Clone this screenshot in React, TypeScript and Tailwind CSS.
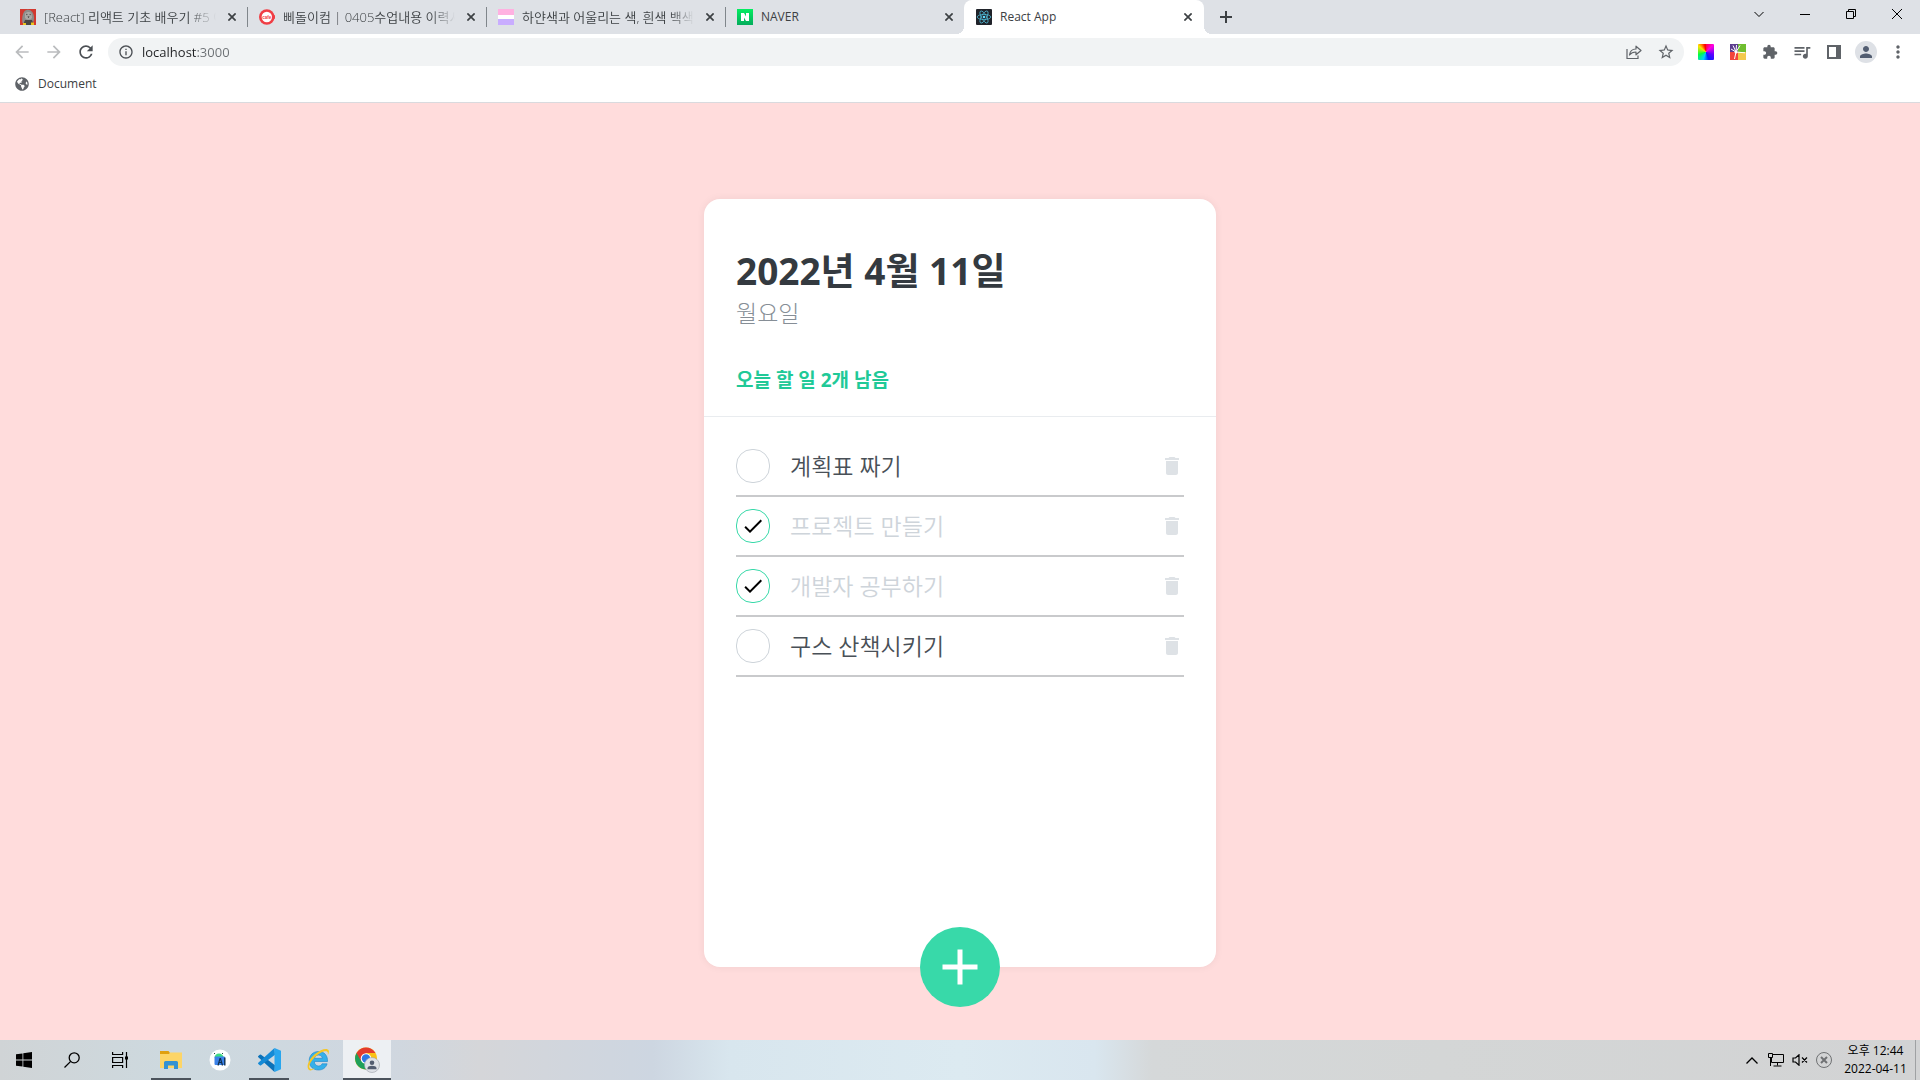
import { useState, type ReactNode } from "react";
import { FaGlobeAmericas } from "react-icons/fa";
import {
  MdAdd,
  MdArrowBack,
  MdArrowForward,
  MdDelete,
  MdDone,
  MdExtension,
  MdInfoOutline,
  MdMoreVert,
  MdPerson,
  MdQueueMusic,
  MdRefresh,
  MdStarBorder,
} from "react-icons/md";

type Todo = { id: number; text: string; done: boolean };

const initialTodos: Todo[] = [
  { id: 1, text: "계획표 짜기", done: false },
  { id: 2, text: "프로젝트 만들기", done: true },
  { id: 3, text: "개발자 공부하기", done: true },
  { id: 4, text: "구스 산책시키기", done: false },
];

/* ---------- Favicons ---------- */

function DogFavicon() {
  return (
    <svg viewBox="0 0 16 16" className="size-4">
      <rect width="16" height="16" fill="#d2382f" />
      <path d="M2.500 14C1.500 8 3 2 6.500 1c4-1 7 2 7.500 7 .2 3-.5 5-1.500 6z" fill="#8d8b88" />
      <path d="M5 4.500c2-2 5-2 6.500 0l.5 4c-1 3-6 3-7 0z" fill="#aaa8a4" />
      <circle cx="6.800" cy="5.500" r=".7" fill="#55524f" />
      <circle cx="10.200" cy="5.500" r=".7" fill="#55524f" />
      <path d="M7.500 7.500h2l-1 1.500z" fill="#2d2b2a" />
      <path d="M5 11h7l2 5H3z" fill="#4a4644" />
      <path d="M3 14h3v2H3zM11 13.500h3V16h-3z" fill="#e9c51e" />
    </svg>
  );
}

function CafeFavicon() {
  return (
    <svg viewBox="0 0 16 16" className="size-4">
      <circle cx="7.800" cy="8" r="7.800" fill="#f03e45" />
      <rect x="14" y="6" width="2" height="4" rx="1" fill="#f03e45" />
      <circle cx="7.800" cy="8" r="5.200" fill="#fff" />
      <text x="7.800" y="9.500" textAnchor="middle" fontSize="4.500" fontWeight="700" fontFamily="Liberation Sans" fill="#f03e45">
        cafe
      </text>
    </svg>
  );
}

function StripeFavicon() {
  return (
    <svg viewBox="0 0 16 16" className="size-4">
      <rect width="16" height="16" fill="#fff" />
      <rect width="16" height="6" fill="#ffb1e1" />
      <rect y="10" width="16" height="6" fill="#c9adff" />
    </svg>
  );
}

function NaverFavicon() {
  return (
    <svg viewBox="0 0 16 16" className="size-4">
      <defs>
        <linearGradient id="naver" x1="0" y1="0" x2="0" y2="1">
          <stop offset="0" stopColor="#03ee61" />
          <stop offset="1" stopColor="#05ac5c" />
        </linearGradient>
      </defs>
      <rect width="16" height="16" fill="url(#naver)" />
      <path d="M4 4h3l2 3.500V4h3v8H9L7 8.500V12H4z" fill="#fff" />
    </svg>
  );
}

function ReactFavicon() {
  return (
    <svg viewBox="0 0 16 16" className="size-4">
      <rect width="16" height="16" rx="1" fill="#20232a" />
      <g fill="none" stroke="#4db5cf" strokeWidth=".8">
        <ellipse cx="8" cy="8" rx="6.800" ry="2.600" />
        <ellipse cx="8" cy="8" rx="6.800" ry="2.600" transform="rotate(60 8 8)" />
        <ellipse cx="8" cy="8" rx="6.800" ry="2.600" transform="rotate(120 8 8)" />
      </g>
      <circle cx="8" cy="8" r="1.300" fill="#61dafb" />
    </svg>
  );
}

/* ---------- Browser window ---------- */

function TabTitle({ children, large }: { children: ReactNode; large?: boolean }) {
  return (
    <span
      className={`min-w-0 flex-1 whitespace-nowrap text-left leading-4 text-[#3c4043] ${
        large ? "text-[13px] font-[350] [mask-image:linear-gradient(to_right,#000_calc(100%-24px),transparent)]" : "text-xs"
      }`}
    >
      {children}
    </span>
  );
}

function CloseTab({ title }: { title: string }) {
  return (
    <button type="button" aria-label={`${title} 닫기`} className="flex size-4 shrink-0 items-center justify-center text-[#3c4043]">
      <svg viewBox="0 0 8 8" className="size-2" stroke="currentColor" strokeWidth="1.700">
        <path d="M.4.4l7.200 7.200M7.600.4L.4 7.600" />
      </svg>
    </button>
  );
}

function TabStrip() {
  const tabs = [
    { title: "[React] 리액트 기초 배우기 #5 이", icon: <DogFavicon />, large: true },
    { title: "삐돌이컴 | 0405수업내용 이력서", icon: <CafeFavicon />, large: true },
    { title: "하얀색과 어울리는 색, 흰색 백색", icon: <StripeFavicon />, large: true },
    { title: "NAVER", icon: <NaverFavicon />, large: false },
  ];
  return (
    <div className="flex h-[34px] bg-[#dee1e6] pl-2">
      {tabs.map((tab, i) => (
        <div key={tab.title} className={`flex w-[239px] items-center gap-2 pr-[7px] ${i === 0 ? "pl-3" : ""}`}>
          {i > 0 && <span className="mr-[3px] h-5 w-px bg-[#80868b]" />}
          {tab.icon}
          <TabTitle large={tab.large}>{tab.title}</TabTitle>
          <CloseTab title={tab.title} />
        </div>
      ))}
      <div className="relative flex w-60 items-center gap-2 rounded-t-lg bg-white pl-3 pr-2">
        <span className="absolute bottom-0 -left-2 size-2 bg-[radial-gradient(circle_at_0_0,transparent_8px,#fff_8px)]" />
        <span className="absolute -right-2 bottom-0 size-2 bg-[radial-gradient(circle_at_100%_0,transparent_8px,#fff_8px)]" />
        <ReactFavicon />
        <TabTitle>React App</TabTitle>
        <CloseTab title="React App" />
      </div>
      <button type="button" aria-label="새 탭" className="ml-2 flex w-7 items-center justify-center text-[#3c4043]">
        <svg viewBox="0 0 12 12" className="size-3" stroke="currentColor" strokeWidth="2">
          <path d="M6 0v12M0 6h12" />
        </svg>
      </button>
      <div className="ml-auto flex h-7 text-black">
        <WindowButton label="탭 검색">
          <path d="M.5 3l4.500 4.500L9.500 3" />
        </WindowButton>
        <WindowButton label="최소화">
          <path d="M0 5.500h10" />
        </WindowButton>
        <WindowButton label="이전 크기로 복원">
          <path d="M.5 2.500h7v7h-7zM2.500 2.500v-2h7v7h-2" />
        </WindowButton>
        <WindowButton label="닫기">
          <path d="M0 0l10 10M10 0L0 10" />
        </WindowButton>
      </div>
    </div>
  );
}

function WindowButton({ label, children }: { label: string; children: ReactNode }) {
  return (
    <button type="button" aria-label={label} className="flex w-[46px] items-center justify-center">
      <svg viewBox="0 0 10 10" className="size-[10px] overflow-visible" fill="none" stroke="currentColor">
        {children}
      </svg>
    </button>
  );
}

function ToolButton({ label, children, className = "text-[#5f6368]" }: { label: string; children: ReactNode; className?: string }) {
  return (
    <button type="button" aria-label={label} className={`flex size-8 shrink-0 items-center justify-center ${className}`}>
      {children}
    </button>
  );
}

function Toolbar() {
  return (
    <div className="flex h-9 items-center bg-white px-[6px]">
      <ToolButton label="뒤로" className="text-[#babcbe]">
        <MdArrowBack className="size-5" />
      </ToolButton>
      <ToolButton label="앞으로" className="text-[#babcbe]">
        <MdArrowForward className="size-5" />
      </ToolButton>
      <ToolButton label="새로고침" className="text-[#4b4f54]">
        <MdRefresh className="size-5" />
      </ToolButton>
      <div className="mx-[6px] flex h-7 flex-1 items-center rounded-full bg-[#f1f3f4] pl-[10px] pr-[2px]">
        <MdInfoOutline className="size-4 shrink-0 text-[#4b4f54]" />
        <div className="ml-2 flex-1 text-[13px] leading-5">
          <input
            aria-label="주소창"
            defaultValue="localhost:3000"
            className="block w-full bg-[linear-gradient(to_right,#202124_55px,#6b6f73_55px)] bg-clip-text text-transparent outline-none"
          />
        </div>
        <ToolButton label="공유">
          <svg viewBox="0 0 16 16" className="size-4" fill="none" stroke="currentColor" strokeWidth="1.200">
            <path d="M1 5v9.500h11v-3" />
            <path d="M3.500 11c.5-4 3-6 6.500-6V2.200l5 4.300-5 4.300V8C7 8 5 9 3.500 11z" strokeLinejoin="round" />
          </svg>
        </ToolButton>
        <ToolButton label="북마크에 추가">
          <MdStarBorder className="size-[18px]" />
        </ToolButton>
      </div>
      <ToolButton label="색상 선택 확장 프로그램">
        <span className="size-4 rounded-[1px] bg-[conic-gradient(from_0deg,#ff0040,#ff00e0_45deg,#6000ff_110deg,#0020ff_160deg,#00d0ff_200deg,#00ff40_250deg,#ffe000_310deg,#ff0000_350deg)]" />
      </ToolButton>
      <ToolButton label="스타일 확장 프로그램">
        <svg viewBox="0 0 16 16" className="size-4">
          <rect width="8" height="8" fill="#5c3d8f" />
          <rect x="8" width="8" height="8" fill="#6fbe2f" />
          <rect y="8" width="8" height="8" fill="#f2453d" />
          <rect x="8" y="8" width="8" height="8" fill="#f3c94e" />
          <path d="M4.500 15L6 8M6 8L1 5M6 8L3 1.500M6 8l.5-7M6 8l4-6.500M6 8l9 .8" stroke="#fff" fill="none" />
          <circle cx="6" cy="8" r="1.500" fill="#fff" />
        </svg>
      </ToolButton>
      <ToolButton label="확장 프로그램">
        <MdExtension className="size-4" />
      </ToolButton>
      <ToolButton label="미디어 제어">
        <MdQueueMusic className="size-5" />
      </ToolButton>
      <ToolButton label="측면 패널">
        <svg viewBox="0 0 14 14" className="size-[14px]" fill="currentColor">
          <path fillRule="evenodd" d="M0 0h14v14H0zM2 2v10h7V2z" />
        </svg>
      </ToolButton>
      <ToolButton label="프로필">
        <span className="flex size-[22px] items-center justify-center rounded-full bg-[#dee1e6] text-[#525d71]">
          <MdPerson className="size-[18px]" />
        </span>
      </ToolButton>
      <ToolButton label="Chrome 맞춤설정">
        <MdMoreVert className="size-5" />
      </ToolButton>
    </div>
  );
}

function BookmarksBar() {
  return (
    <nav className="flex h-[33px] items-start border-b border-[#d9dade] bg-white pt-[6px] pl-[15px]">
      <a href="#document" className="flex items-center gap-[9px] text-xs leading-4 text-[#3c4043]">
        <FaGlobeAmericas className="size-[14px] text-[#5f6368]" />
        Document
      </a>
    </nav>
  );
}

/* ---------- Todo app ---------- */

function TodoRow({ todo, onToggle, onRemove }: { todo: Todo; onToggle: () => void; onRemove: () => void }) {
  const id = `todo-${todo.id}`;
  return (
    <li className="flex items-center border-b-2 border-[#c9cacc] py-3">
      <span className="mr-5 grid size-[34px] place-items-center">
        <input
          id={id}
          type="checkbox"
          checked={todo.done}
          onChange={onToggle}
          className="col-start-1 row-start-1 size-[34px] appearance-none rounded-[16px] border border-[#ced4da] checked:border-[#38d9a9]"
        />
        {todo.done && <MdDone className="pointer-events-none col-start-1 row-start-1 size-6 text-black" />}
      </span>
      <label htmlFor={id} className={`flex-1 text-[23px] leading-8 font-[350] ${todo.done ? "text-[#ced4da]" : "text-[#495057]"}`}>
        {todo.text}
      </label>
      <button type="button" aria-label={`${todo.text} 삭제`} onClick={onRemove} className="text-[#dee2e6]">
        <MdDelete className="size-6" />
      </button>
    </li>
  );
}

function TodoCard() {
  const [todos, setTodos] = useState(initialTodos);
  const left = todos.filter((t) => !t.done).length;
  const toggle = (id: number) => setTodos((list) => list.map((t) => (t.id === id ? { ...t, done: !t.done } : t)));
  const remove = (id: number) => setTodos((list) => list.filter((t) => t.id !== id));

  return (
    <section className="relative flex w-full max-w-lg flex-1 flex-col rounded-2xl bg-white shadow-[0_0_8px_rgba(0,0,0,0.06)]">
      <header className="border-b border-[#e9ecef] px-8 pt-12 pb-6">
        <h1 className="text-[37px] leading-[48px] font-bold text-[#343a40]">2022년 4월 11일</h1>
        <p className="mt-1 text-[23px] leading-7 font-light text-[#868e96]">월요일</p>
        <p className="mt-[41px] text-[19px] leading-6 font-bold text-[#20c997]">오늘 할 일 {left}개 남음</p>
      </header>
      <ul className="flex-1 px-8 pt-5 pb-12">
        {todos.map((todo) => (
          <TodoRow key={todo.id} todo={todo} onToggle={() => toggle(todo.id)} onRemove={() => remove(todo.id)} />
        ))}
      </ul>
      <button
        type="button"
        aria-label="할 일 추가"
        className="absolute bottom-0 left-1/2 flex size-20 -translate-x-1/2 translate-y-1/2 items-center justify-center rounded-full bg-[#38d9a9] text-white"
      >
        <MdAdd className="size-[60px]" />
      </button>
    </section>
  );
}

/* ---------- Taskbar ---------- */

function TaskButton({ label, children, open, active }: { label: string; children: ReactNode; open?: boolean; active?: boolean }) {
  return (
    <button
      type="button"
      aria-label={label}
      className={`relative flex w-12 items-center justify-center ${active ? "bg-[#edf0f3]" : ""}`}
    >
      {children}
      {open && <span className={`absolute bottom-0 h-[2px] bg-[#4b535c] ${active ? "inset-x-0" : "inset-x-1"}`} />}
    </button>
  );
}

function Taskbar() {
  return (
    <footer className="flex h-10 bg-[linear-gradient(to_right,#d0d4d6_0%,#cdd9df_9%,#cfd7e0_20%,#d5d6d9_25%,#cdd6e1_34%,#d8e6ee_38%,#dceaf1_50%,#d9e6ef_57%,#d5d8d9_60%,#d4d6d6_75%,#d2d3d4_100%)] text-black">
      <TaskButton label="시작">
        <svg viewBox="0 0 16 16" className="size-4">
          <path d="M0 2.300l6.500-.9v6.100H0zM7.300 1.300L16 0v7.500H7.300zM0 8.400h6.500v6.200L0 13.700zM7.300 8.400H16V16l-8.700-1.300z" />
        </svg>
      </TaskButton>
      <TaskButton label="검색">
        <svg viewBox="0 0 16 16" className="size-4" fill="none" stroke="currentColor" strokeWidth="1.300">
          <circle cx="10.200" cy="5.800" r="5" />
          <path d="M6.700 9.400L.5 15.500" />
        </svg>
      </TaskButton>
      <TaskButton label="작업 보기">
        <svg viewBox="0 0 16 16" className="size-4" fill="none" stroke="currentColor" strokeWidth="1.200">
          <path d="M.6 0v2.500h10V0M.6 16v-2.500h10V16M.6 5.500h10v5H.6zM14.500 0v16" />
          <rect x="13" y="4.500" width="3" height="3" fill="currentColor" stroke="none" />
        </svg>
      </TaskButton>
      <div className="ml-[3px] flex gap-px">
        <TaskButton label="파일 탐색기" open>
          <svg viewBox="0 0 22 18" className="h-[18px] w-[22px]">
            <path d="M0 0h8.500l1.500 2v3H0z" fill="#e0a010" />
            <path d="M0 3h9l1-1.500h12V17H0z" fill="#fdd567" />
            <path d="M4 11.500a1.500 1.500 0 011.500-1.500h11a1.500 1.500 0 011.500 1.500V18h-4v-3.500H8V18H4z" fill="#3592d3" />
          </svg>
        </TaskButton>
        <TaskButton label="Android Studio">
          <svg viewBox="0 0 22 22" className="size-[22px]">
            <circle cx="11" cy="11" r="10.500" fill="#fff" />
            <path d="M5.500 8.500a4.500 4 0 019 0z" fill="#3ddc84" />
            <path d="M6 5L5 4M13 5l1-1" stroke="#1b4c40" />
            <rect x="5.500" y="7.500" width="10.500" height="8.500" rx="1" fill="#3b82e8" />
            <path d="M9 16.500l2-7h.5l2 7M10 13.500h3" fill="none" stroke="#10304f" strokeWidth="1.200" />
            <path d="M15.800 8.500v8" stroke="#10304f" strokeWidth="1.400" />
          </svg>
        </TaskButton>
        <TaskButton label="Visual Studio Code" open>
          <svg viewBox="0 0 24 24" className="size-6">
            <path d="M17.500 24L1.300 9.200a.8.8 0 010-1.200l1.500-1.300a1 1 0 011.300 0L18 17.200z" fill="#0b72b9" />
            <path d="M17.500 0L1.300 14.800a.8.8 0 000 1.200l1.500 1.300a1 1 0 001.300 0L18 6.800z" fill="#148ad6" />
            <path d="M17.500 0L24 2.800v18.400L17.500 24z" fill="#29a6ee" />
          </svg>
        </TaskButton>
        <TaskButton label="Internet Explorer">
          <svg viewBox="0 0 24 24" className="size-6">
            <path
              d="M21.500 13.500H8.300c.2 3 2 4.500 4.200 4.500 1.800 0 2.900-.8 3.500-2.200h5.100C20 19.700 16.800 22 12.500 22 6.800 22 3.200 18.200 3.200 12.800 3.200 7.300 7 3.500 12.500 3.500c5.800 0 9.400 4 9 10zM8.500 10.300h7.800c-.2-2-1.600-3.200-3.800-3.200s-3.600 1.200-4 3.200z"
              fill="#35b0ea"
              stroke="#1b83c9"
              strokeWidth=".6"
            />
            <path d="M3 22C-.5 19 3 11 9 6 15 1 21.500-.5 22.700 2.500c.5 1.300 0 3-.9 4.500.3-1.800.1-2.800-.8-3.400C18.500 2.200 13 5 8.500 9.500 4 14 1.800 19 4.200 20.800c1.200.8 3 .3 5-.7C6.500 22.300 4.300 23 3 22z" fill="#f5c626" />
          </svg>
        </TaskButton>
        <TaskButton label="Chrome" open active>
          <svg viewBox="0 0 26 26" className="size-[26px]">
            <circle cx="12" cy="11.500" r="11" fill="#fbc116" />
            <path d="M2.500 6a11 11 0 009.500 16.500l5-8.500-5-2.500z" fill="#1fa05a" />
            <path d="M2.500 6A11 11 0 0121.500 6H12L7 14z" fill="#e33b2e" />
            <circle cx="12" cy="11.500" r="5.300" fill="#fff" />
            <circle cx="12" cy="11.500" r="4.200" fill="#2f78e4" />
            <circle cx="18" cy="18" r="7.500" fill="#dfe2e7" stroke="#9aa0a8" strokeWidth=".6" />
            <circle cx="18" cy="15.700" r="2.300" fill="#535d70" />
            <path d="M13.500 22.200v-1.200c0-1.500 2.500-2.300 4.500-2.300s4.500.8 4.500 2.300v1.200z" fill="#535d70" />
          </svg>
        </TaskButton>
      </div>
      <div className="ml-auto flex items-center">
        <button type="button" aria-label="숨겨진 아이콘 표시" className="flex w-6 justify-center">
          <svg viewBox="0 0 12 7" className="h-[7px] w-3" fill="none" stroke="currentColor" strokeWidth="1.300">
            <path d="M.5 6.500L6 1l5.500 5.500" />
          </svg>
        </button>
        <button type="button" aria-label="네트워크" className="flex w-6 justify-center">
          <svg viewBox="0 0 16 14" className="h-[14px] w-4" fill="none" stroke="currentColor">
            <path d="M5 1.500h10.500v8H3.500V5M9.500 9.500v3M5.500 13h8" />
            <path d="M.5.500h4v4h-4zM2.500 4.500V13" />
          </svg>
        </button>
        <button type="button" aria-label="음소거" className="flex w-6 justify-center">
          <svg viewBox="0 0 16 12" className="h-3 w-4" fill="none" stroke="currentColor" strokeWidth="1.200">
            <path d="M1 4h2.500L7 .8v10.400L3.500 8H1zM10 3.500l5 5M15 3.500l-5 5" />
          </svg>
        </button>
        <button type="button" aria-label="알림" className="flex w-6 justify-center text-[#6f7173]">
          <svg viewBox="0 0 16 16" className="size-4" fill="none" stroke="currentColor">
            <circle cx="8" cy="8" r="7.500" />
            <path d="M5 5l6 6M11 5l-6 6" strokeWidth="2" />
          </svg>
        </button>
        <div className="w-[79px] text-center text-xs leading-[18px]">
          <div>오후 12:44</div>
          <div>2022-04-11</div>
        </div>
        <button type="button" aria-label="바탕 화면 보기" className="h-10 w-[5px] border-l border-[#9fa1a3]" />
      </div>
    </footer>
  );
}

export default function App() {
  return (
    <div className="flex min-h-screen flex-col bg-white font-['Open_Sans','Noto_Sans_CJK_KR',sans-serif]">
      <TabStrip />
      <Toolbar />
      <BookmarksBar />
      <main className="flex flex-1 flex-col items-center bg-[#ffdcdc] pt-24 pb-[73px]">
        <TodoCard />
      </main>
      <Taskbar />
    </div>
  );
}
